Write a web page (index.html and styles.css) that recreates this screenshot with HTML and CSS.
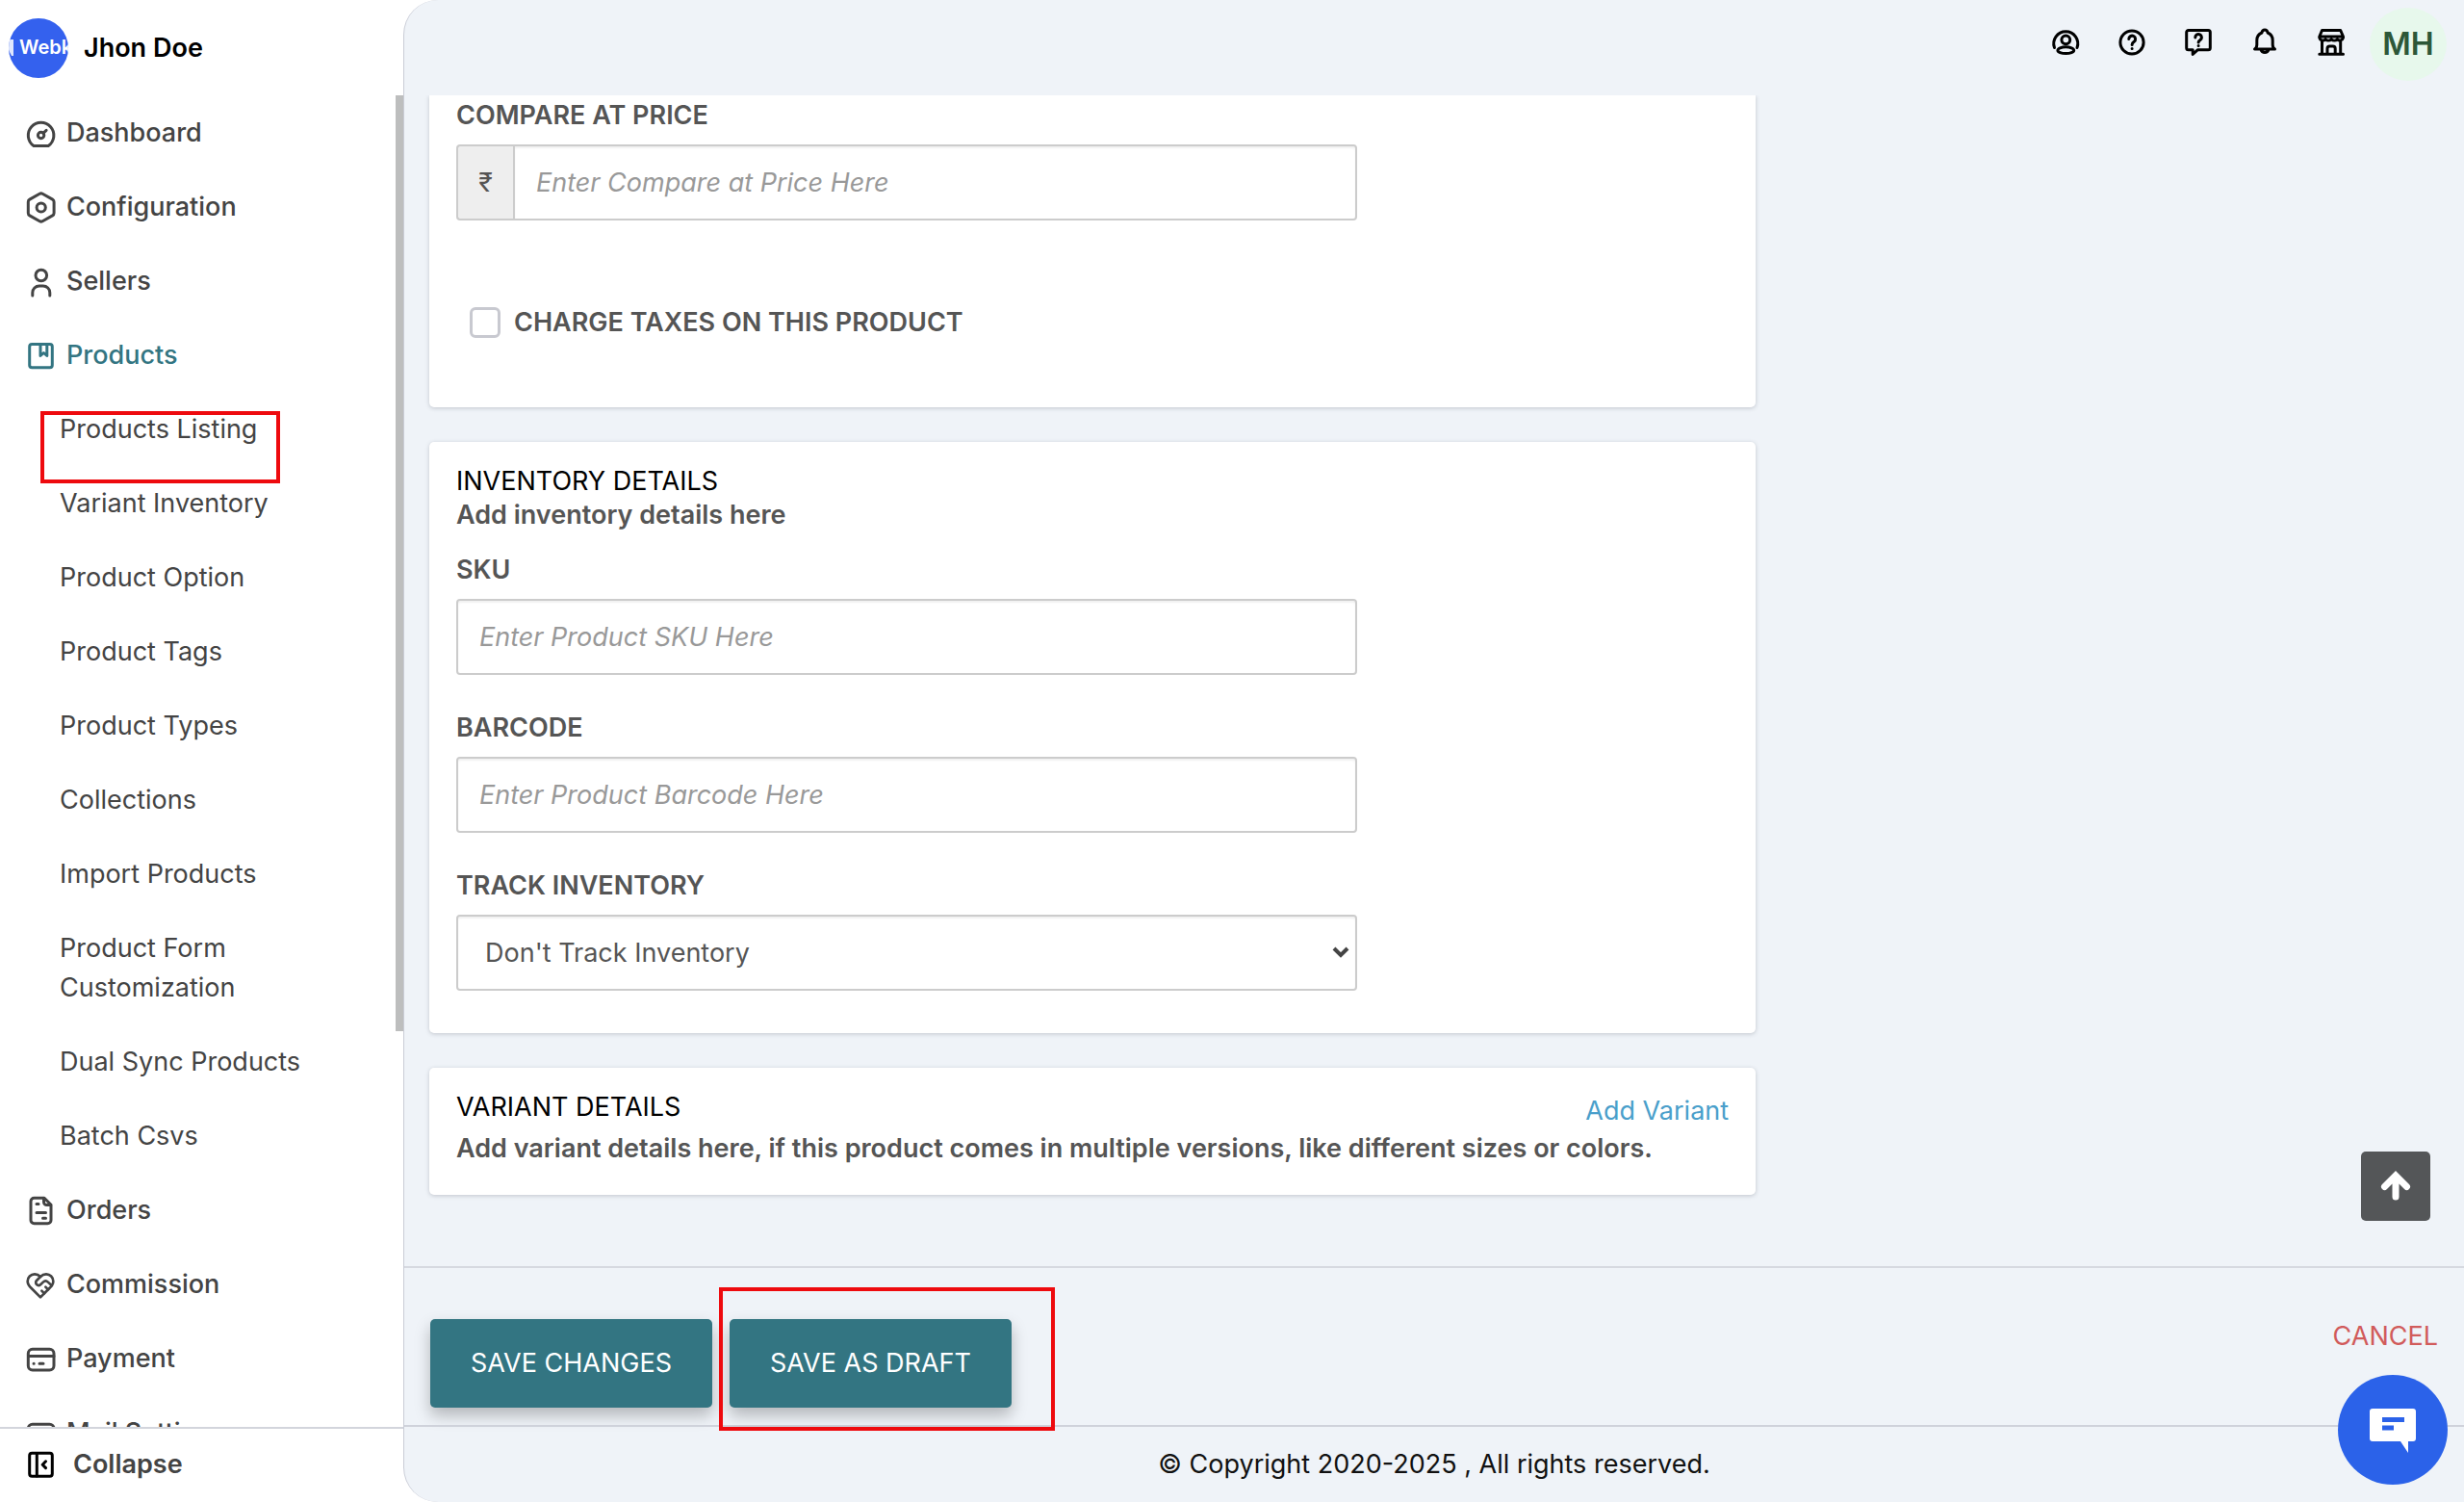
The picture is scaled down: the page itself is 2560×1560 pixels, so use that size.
FILE: index.html
```html
<!DOCTYPE html>
<html lang="en">
<head>
    <meta charset="UTF-8">
    <meta name="viewport" content="width=device-width, initial-scale=1.0">
    <title>Edit Product</title>
    <link rel="stylesheet" href="styles.css">
</head>
<body>
    <div class="sidebar">
        <div class="profile">
            <div class="avatar">
                <svg width="7" height="20" viewBox="0 0 7 20"><path d="M0 1h5v17H3L0 12z" fill="#fff" opacity=".85"/></svg>
                <span>Webk</span>
            </div>
            <span class="profile-name">Jhon Doe</span>
        </div>

        <nav class="menu">
            <a class="menu-item" href="#">
                <svg class="icon" viewBox="0 0 32 32"><path d="M9 29.4h15.2a13.3 13.3 0 1 0-15.2 0z"/><circle cx="16.6" cy="18.5" r="3.2"/><path d="M18.9 16.3l3.2-3"/></svg>
                Dashboard
            </a>
            <a class="menu-item" href="#">
                <svg class="icon" viewBox="0 0 32 32"><path d="M15.2 2.3a3 3 0 0 1 3 0l10.4 5.8a3 3 0 0 1 1.5 2.6v11.6a3 3 0 0 1-1.5 2.6l-10.4 5.8a3 3 0 0 1-3 0L4.8 24.9a3 3 0 0 1-1.5-2.6V10.7a3 3 0 0 1 1.5-2.6z"/><circle cx="16.7" cy="16.5" r="4.6"/></svg>
                Configuration
            </a>
            <a class="menu-item" href="#">
                <svg class="icon" viewBox="0 0 32 32"><circle cx="16.8" cy="10" r="5.8"/><path d="M7.8 31v-3a7 7 0 0 1 7-7h4a7 7 0 0 1 7 7v3"/></svg>
                Sellers
            </a>
            <a class="menu-item active" href="#">
                <svg class="icon" viewBox="0 0 32 32"><rect x="4.7" y="4.6" width="23.6" height="24.2" rx="2.5"/><path d="M16 5v11.5l3.4-3 3.4 3V5"/></svg>
                Products
            </a>
            <div class="submenu">
                <a class="submenu-item" href="#">Products Listing<span class="mark mark-listing"></span></a>
                <a class="submenu-item" href="#">Variant Inventory</a>
                <a class="submenu-item" href="#">Product Option</a>
                <a class="submenu-item" href="#">Product Tags</a>
                <a class="submenu-item" href="#">Product Types</a>
                <a class="submenu-item" href="#">Collections</a>
                <a class="submenu-item" href="#">Import Products</a>
                <a class="submenu-item" href="#">Product Form<br>Customization</a>
                <a class="submenu-item" href="#">Dual Sync Products</a>
                <a class="submenu-item" href="#">Batch Csvs</a>
            </div>
            <a class="menu-item" href="#">
                <svg class="icon" viewBox="0 0 32 32"><path d="M9.5 3.2H20l7 7v16a3.5 3.5 0 0 1-3.5 3.5h-14A3.5 3.5 0 0 1 6 26.200V6.700a3.5 3.5 0 0 1 3.500-3.500z"/><path d="M19.500 3.500v4a3 3 0 0 0 3 3h4"/><path d="M12 9.500h2M12 18.500h9.500M18.500 24.200h3"/></svg>
                Orders
            </a>
            <a class="menu-item" href="#">
                <svg class="icon icon-24" viewBox="0 -1 24 24"><path d="M19 14c1.490-1.460 3-3.210 3-5.500A5.500 5.500 0 0 0 16.500 3c-1.760 0-3 .5-4.500 2-1.500-1.500-2.740-2-4.500-2A5.500 5.500 0 0 0 2 8.500c0 2.300 1.500 4.050 3 5.500l7 7z"/><path d="M12 5 9.040 7.960a2.170 2.170 0 0 0 0 3.080c.82.82 2.130.85 3 .07l2.070-1.900a2.820 2.820 0 0 1 3.790 0l2.960 2.660M18 15l-2-2M15 18l-2-2"/></svg>
                Commission
            </a>
            <a class="menu-item" href="#">
                <svg class="icon" viewBox="0 0 32 32"><rect x="3.300" y="6.200" width="26.700" height="21.700" rx="4.500"/><path d="M3.500 13.500H30M9 21.200h.2M15 21.200h4"/></svg>
                Payment
            </a>
            <a class="menu-item" href="#">
                <svg class="icon" viewBox="0 0 32 32"><rect x="3.300" y="7.200" width="26.700" height="21.700" rx="4.500"/><path d="M8 14l8.700 6 8.700-6"/></svg>
                Mail Settings
            </a>
            <span class="scroll-thumb"></span>
        </nav>

        <button class="collapse" type="button">
            <svg class="icon" viewBox="0 0 32 32"><rect x="4.700" y="4.200" width="23.600" height="24" rx="2.500"/><path d="M12.300 4.500v23.500M21.500 12.800L18.200 16.200l3.300 3.400"/></svg>
            Collapse
        </button>
    </div>

    <div class="main">
        <header class="topbar">
            <a class="top-link" href="#" aria-label="Account">
                <svg class="top-icon" viewBox="0 0 28 28"><path d="M2.500 19.500a12.500 12.500 0 1 1 23.500 0"/><circle cx="14.300" cy="11.300" r="4.400"/><ellipse cx="14.300" cy="22.200" rx="8.400" ry="3.400"/></svg>
            </a>
            <a class="top-link" href="#" aria-label="Help">
                <svg class="top-icon" viewBox="0 0 28 28"><circle cx="14" cy="14" r="12.100"/><path d="M10.800 10.500a3.400 3.400 0 1 1 5.400 2.800c-1.400 1-2.100 1.600-2.100 3.100M14.100 20.400v.2"/></svg>
            </a>
            <a class="top-link" href="#" aria-label="Support">
                <svg class="top-icon" viewBox="0 0 28 28"><path d="M3.700 1.500h20.600a2 2 0 0 1 2 2v16.200a2 2 0 0 1-2 2H13.500L8.200 26.400v-4.700H3.700a2 2 0 0 1-2-2V3.500a2 2 0 0 1 2-2z"/><path d="M10.800 9a3.300 3.300 0 1 1 5.200 2.500c-1.300.9-1.900 1.400-1.900 2.600M14.100 17.400v.2"/></svg>
            </a>
            <a class="top-link" href="#" aria-label="Notifications">
                <svg class="top-icon" viewBox="0 0 28 28"><path d="M3.500 21h21c-1.700-1-2.300-2.500-2.300-4.500V12c0-4-2.200-6.800-5.200-8a3 3 0 0 0-6 0c-3 1.200-5.200 4-5.200 8v4.500c0 2-.6 3.500-2.300 4.500zM10 21.500a4.200 4.200 0 0 0 8 0"/></svg>
            </a>
            <a class="top-link" href="#" aria-label="Store">
                <svg class="top-icon" viewBox="0 0 28 28"><path d="M4.500 1.500h19.200l2.800 6.500H1.800zM1.800 8v1.200a3.600 3.600 0 0 0 6.200 1.700 4.600 4.600 0 0 0 6.200 0 4.600 4.600 0 0 0 6.200 0A3.600 3.600 0 0 0 26.500 9.200V8M4.500 12.500V26M23.700 12.500V26M1.800 26.200h24.700M10 26v-5.500a2.500 2.500 0 0 1 2.500-2.500h3.200a2.500 2.500 0 0 1 2.500 2.500V26"/></svg>
            </a>
            <a class="user-badge" href="#">MH</a>
        </header>

        <div class="content">
            <section class="card card-price">
                <div class="field">
                    <label for="comparePrice">COMPARE AT PRICE</label>
                    <div class="input-group">
                        <span class="addon">₹</span>
                        <input class="input" type="text" id="comparePrice" placeholder="Enter Compare at Price Here">
                    </div>
                </div>
                <div class="check-row">
                    <input class="check" type="checkbox" id="chargeTaxes">
                    <label for="chargeTaxes">CHARGE TAXES ON THIS PRODUCT</label>
                </div>
            </section>

            <section class="card card-inventory">
                <h2>INVENTORY DETAILS</h2>
                <p class="hint">Add inventory details here</p>
                <div class="field">
                    <label for="sku">SKU</label>
                    <input class="input" type="text" id="sku" placeholder="Enter Product SKU Here">
                </div>
                <div class="field">
                    <label for="barcode">BARCODE</label>
                    <input class="input" type="text" id="barcode" placeholder="Enter Product Barcode Here">
                </div>
                <div class="field">
                    <label for="track">TRACK INVENTORY</label>
                    <div class="select-wrap">
                        <select class="input" id="track">
                            <option>Don't Track Inventory</option>
                            <option>Track Inventory</option>
                        </select>
                        <svg class="select-arrow" viewBox="0 0 18 12"><path d="M2 2l7 7 7-7"/></svg>
                    </div>
                </div>
            </section>

            <section class="card card-variant">
                <div class="card-head">
                    <h2>VARIANT DETAILS</h2>
                    <a class="add-link" href="#">Add Variant</a>
                </div>
                <p class="hint">Add variant details here, if this product comes in multiple versions, like different sizes or colors.</p>
            </section>
        </div>

        <div class="actions">
            <button class="btn" type="button">SAVE CHANGES</button>
            <div class="draft">
                <button class="btn" type="button">SAVE AS DRAFT</button>
                <span class="mark mark-draft"></span>
            </div>
            <a class="cancel" href="#">CANCEL</a>
        </div>

        <footer class="footer">© Copyright 2020-2025 , All rights reserved.</footer>
    </div>

    <button class="to-top" type="button" aria-label="Back to top">
        <svg width="32" height="32" viewBox="0 0 32 32"><path d="M16 27V6M4.500 16.500L16 5l11.500 11.500"/></svg>
    </button>
    <button class="chat" type="button" aria-label="Chat">
        <svg width="50" height="50" viewBox="0 0 50 50"><path d="M4 3h42a3 3 0 0 1 3 3v28a3 3 0 0 1-3 3h-5v12L33 37H4a3 3 0 0 1-3-3V6a3 3 0 0 1 3-3z" fill="#fff"/><path d="M14 14.500h23M14 23h12" stroke="#2b62e9" stroke-width="5"/></svg>
    </button>
</body>
</html>
```
FILE: styles.css
```css
* {
    box-sizing: border-box;
}

html, body {
    margin: 0;
    padding: 0;
    height: 100%;
}

body {
    display: flex;
    background: #fff;
    font-family: 'Inter', sans-serif;
    font-size: 27px;
    line-height: 35px;
    color: #555;
    overflow: hidden;
}

a {
    color: inherit;
    text-decoration: none;
}

button,
input,
select {
    font: inherit;
}

h2,
p {
    margin: 0;
    font-size: 27px;
}

/* SIDEBAR */
.sidebar {
    display: flex;
    flex-direction: column;
    width: 419px;
    flex-shrink: 0;
    height: 100vh;
    color: #444;
}

.profile {
    display: flex;
    align-items: center;
    gap: 16px;
    height: 99px;
    flex-shrink: 0;
    padding-left: 9px;
}

.avatar {
    display: flex;
    align-items: center;
    gap: 4px;
    width: 62px;
    height: 62px;
    border-radius: 50%;
    background: #3461ee;
    color: #fff;
    font-size: 20px;
    font-weight: 600;
    overflow: hidden;
}

.avatar svg {
    flex-shrink: 0;
}

.profile-name {
    color: #000;
    font-weight: 600;
}

.menu {
    position: relative;
    flex: 1;
    min-height: 0;
    overflow: hidden;
}

.menu-item {
    display: flex;
    align-items: center;
    gap: 11px;
    padding: 18px 26px;
    line-height: 41px;
    font-weight: 500;
}

.menu-item.active {
    color: #337582;
}

.submenu-item {
    display: block;
    position: relative;
    padding: 18px 62px;
    line-height: 41px;
}

.icon {
    width: 32px;
    height: 32px;
    flex-shrink: 0;
    overflow: visible;
    fill: none;
    stroke: currentColor;
    stroke-width: 3;
    stroke-linecap: round;
    stroke-linejoin: round;
}

.icon-24 {
    stroke-width: 2;
}

.scroll-thumb {
    position: absolute;
    top: 0;
    right: 0;
    width: 8px;
    height: 972px;
    background: #bdbebe;
}

.collapse {
    display: flex;
    align-items: center;
    gap: 18px;
    height: 78px;
    flex-shrink: 0;
    padding: 0 26px 3px;
    border: none;
    border-top: 2px solid #d3d5dc;
    background: #fff;
    color: #444;
    font-weight: 600;
    cursor: pointer;
}

.collapse .icon {
    color: #000;
}

/* MAIN */
.main {
    display: flex;
    flex-direction: column;
    flex: 1;
    min-width: 0;
    height: 100vh;
    background: #eff3f8;
    border-left: 1px solid #c9ccd6;
    border-radius: 36px 0 0 36px;
}

.topbar {
    display: flex;
    align-items: center;
    justify-content: flex-end;
    gap: 41px;
    height: 99px;
    flex-shrink: 0;
    padding: 0 18px 12px 0;
}

.top-link {
    display: flex;
}

.top-icon {
    width: 28px;
    height: 28px;
    overflow: visible;
    fill: none;
    stroke: #000;
    stroke-width: 3;
    stroke-linecap: round;
    stroke-linejoin: round;
}

.user-badge {
    width: 80px;
    height: 76px;
    margin: 4px 0 0 -15px;
    border-radius: 50%;
    background: #e7f8ec;
    color: #2d5738;
    font-size: 32px;
    font-weight: 600;
    line-height: 76px;
    text-align: center;
}

.content {
    display: flex;
    flex-direction: column;
    gap: 36px;
    flex: 1;
    min-height: 0;
    padding: 0 26px;
    overflow: hidden;
}

.card {
    width: 66%;
    flex-shrink: 0;
    padding: 23px 28px;
    background: #fff;
    border-radius: 5px;
    box-shadow: 0 1px 4px rgba(60, 64, 80, 0.25);
}

.card h2 {
    color: #000;
    font-weight: 400;
}

.hint {
    font-weight: 600;
}

.card-price {
    padding-top: 3px;
    padding-bottom: 71px;
    border-radius: 0 0 5px 5px;
}

.card-inventory {
    padding-bottom: 44px;
}

.card-inventory .hint {
    margin-bottom: 22px;
}

.card-head {
    display: flex;
    justify-content: space-between;
    margin-bottom: 4px;
}

.card-variant {
    padding-bottom: 31px;
}

.add-link {
    margin-top: 4px;
    color: #4a9fcb;
}

.field {
    display: flex;
    flex-direction: column;
    gap: 13px;
    max-width: 936px;
}

.field + .field {
    margin-top: 37px;
}

label {
    font-weight: 600;
}

.input-group {
    display: flex;
}

.addon {
    width: 59px;
    border: 2px solid #ccc;
    border-right: none;
    border-radius: 4px 0 0 4px;
    background: #eee;
    font-size: 27px;
    line-height: 75px;
    text-align: center;
}

.input {
    width: 100%;
    height: 79px;
    padding: 0 22px;
    border: 2px solid #ccc;
    border-radius: 4px;
    background: #fff;
    color: #555;
    box-shadow: inset 0 2px 2px rgba(0, 0, 0, 0.06);
}

.input-group .input {
    flex: 1;
    border-radius: 0 4px 4px 0;
}

.input::placeholder {
    color: #999;
    font-style: italic;
}

.select-wrap {
    position: relative;
}

select.input {
    display: block;
    padding: 0 28px;
    appearance: none;
}

.select-arrow {
    position: absolute;
    top: 33px;
    right: 8px;
    width: 18px;
    height: 12px;
    fill: none;
    stroke: #444;
    stroke-width: 4;
    pointer-events: none;
}

.check-row {
    display: flex;
    align-items: center;
    gap: 14px;
    margin-top: 88px;
    padding-left: 14px;
}

.check {
    width: 32px;
    height: 32px;
    margin: 0;
    border: 3px solid #c8c9d0;
    border-radius: 6px;
    background: #fff;
    appearance: none;
}

/* ACTIONS */
.actions {
    display: flex;
    align-items: flex-start;
    gap: 18px;
    flex-shrink: 0;
    padding: 53px 27px 18px;
    border-top: 2px solid #d6d9e0;
}

.btn {
    display: block;
    height: 92px;
    padding: 0 42px 2px;
    border: none;
    border-radius: 5px;
    background: #337582;
    color: #fff;
    box-shadow: 0 8px 16px rgba(0, 0, 0, 0.25);
    cursor: pointer;
}

.draft {
    position: relative;
}

.cancel {
    margin-left: auto;
    color: #d15b5b;
}

.footer {
    flex-shrink: 0;
    padding: 21px 0 22px;
    border-top: 2px solid #cfd2db;
    color: #111;
    text-align: center;
}

/* HIGHLIGHTS */
.mark {
    position: absolute;
    z-index: 2;
    border: 4px solid #ee0a0e;
    pointer-events: none;
}

.mark-listing {
    top: 20px;
    left: 42px;
    width: 249px;
    height: 75px;
}

.mark-draft {
    top: -33px;
    left: -11px;
    width: 349px;
    height: 149px;
}

/* FLOATING BUTTONS */
.to-top {
    position: fixed;
    right: 35px;
    bottom: 292px;
    display: flex;
    align-items: center;
    justify-content: center;
    width: 72px;
    height: 72px;
    padding: 0;
    border: none;
    border-radius: 5px;
    background: #545658;
}

.to-top svg {
    fill: none;
    stroke: #fff;
    stroke-width: 7;
    stroke-linecap: round;
}

.chat {
    position: fixed;
    right: 17px;
    bottom: 18px;
    display: flex;
    align-items: center;
    justify-content: center;
    width: 114px;
    height: 114px;
    padding: 0;
    border: none;
    border-radius: 50%;
    background: #2b62e9;
}
```
